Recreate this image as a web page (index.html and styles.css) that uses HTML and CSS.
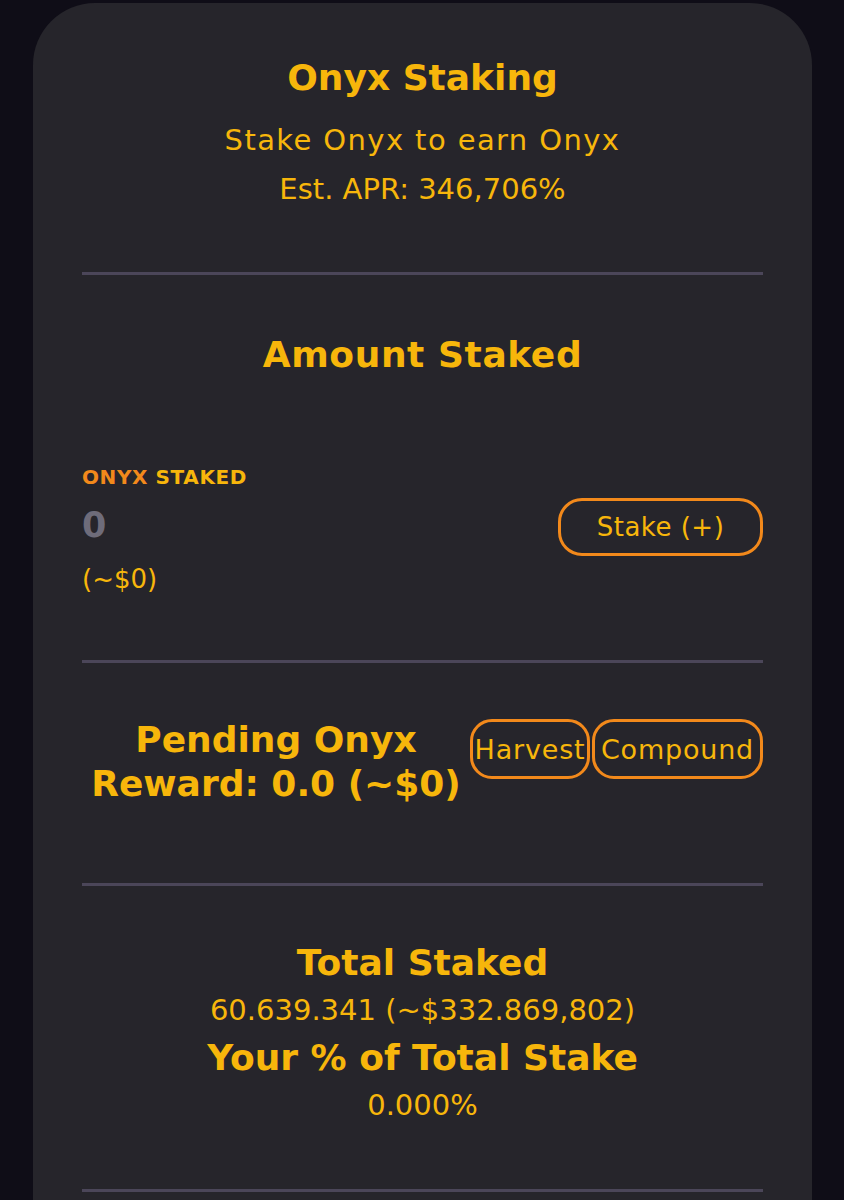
FILE: index.html
```html
<!DOCTYPE html>
<html lang="en">
<head>
    <meta charset="UTF-8">
    <meta name="viewport" content="width=device-width, initial-scale=1.0">
    <title>Onyx Staking</title>
    <link rel="stylesheet" href="styles.css">
</head>
<body>
    <div class="card">
        <div class="head">
            <h1>Onyx Staking</h1>
            <p class="tagline">Stake Onyx to earn Onyx</p>
            <p>Est. APR: 346,706%</p>
        </div>

        <hr>

        <div class="staked">
            <h2>Amount Staked</h2>
            <div class="row">
                <div class="amount">
                    <div class="label"><span class="token">ONYX</span> STAKED</div>
                    <div class="value">0</div>
                    <div class="usd">(~$0)</div>
                </div>
                <button class="btn stake">Stake (+)</button>
            </div>
        </div>

        <hr>

        <div class="pending">
            <h2 class="reward">Pending Onyx<br>Reward: 0.0 (~$0)</h2>
            <div class="actions">
                <button class="btn small harvest">Harvest</button>
                <button class="btn small compound">Compound</button>
            </div>
        </div>

        <hr>

        <div class="totals">
            <h2>Total Staked</h2>
            <p>60.639.341 (~$332.869,802)</p>
            <h2>Your % of Total Stake</h2>
            <p>0.000%</p>
        </div>

        <hr>
    </div>
</body>
</html>
```

FILE: styles.css
```css
body {
    margin: 0;
    background-color: #0f0d17;
    font-family: "DejaVu Sans", "Noto Sans", sans-serif;
    color: #f7b60b;
    height: 1200px;
    overflow: hidden;
}
.card {
    margin: 3px 32px 0 33px;
    background-color: #26252b;
    border-radius: 62px 62px 0 0;
    padding: 47px 49px 40px;
    height: 1300px;
}
hr {
    border: none;
    height: 3px;
    background-color: #4b4659;
    margin: 0;
}
h1, h2, p {
    margin: 0;
    text-align: center;
}
h1 {
    font-size: 36px;
    line-height: 56px;
    font-weight: 700;
    margin-bottom: 10px;
}
h2 {
    font-size: 36px;
    line-height: 48px;
    font-weight: 700;
    letter-spacing: 0.6px;
}
p {
    font-size: 29px;
    line-height: 49px;
}
.tagline {
    letter-spacing: 1.4px;
}
.head {
    padding-bottom: 58px;
}
.staked {
    padding: 56px 0 57px;
}
.row {
    display: flex;
    justify-content: space-between;
    align-items: flex-start;
    margin-top: 80px;
}
.label {
    font-size: 20px;
    font-weight: 700;
    line-height: 36px;
    letter-spacing: 0.6px;
}
.token {
    color: #f2891b;
}
.value {
    font-size: 35px;
    font-weight: 700;
    color: #6e6c7a;
    line-height: 60px;
}
.usd {
    font-size: 26px;
    line-height: 48px;
}
.btn {
    font-family: inherit;
    background-color: transparent;
    color: #f7b60b;
    border: 3px solid #f2891b;
    cursor: pointer;
}
.stake {
    width: 205px;
    height: 58px;
    border-radius: 24px;
    font-size: 26px;
    letter-spacing: 0.5px;
    margin-top: 39px;
}
.pending {
    display: flex;
    align-items: flex-start;
    padding: 55px 0 77px;
}
.reward {
    flex: 1;
    font-size: 36px;
    line-height: 44px;
    letter-spacing: 0;
}
.actions {
    display: flex;
    gap: 2px;
    margin-top: 1px;
}
.small {
    height: 60px;
    border-radius: 22px;
    font-size: 27px;
    letter-spacing: 0.8px;
    padding: 0;
}
.harvest {
    width: 120px;
}
.compound {
    width: 171px;
}
.totals {
    padding: 53px 0 60px;
}
.totals h2 {
    font-size: 36px;
    line-height: 47px;
    letter-spacing: 0;
}
.totals p {
    line-height: 48px;
}
```
